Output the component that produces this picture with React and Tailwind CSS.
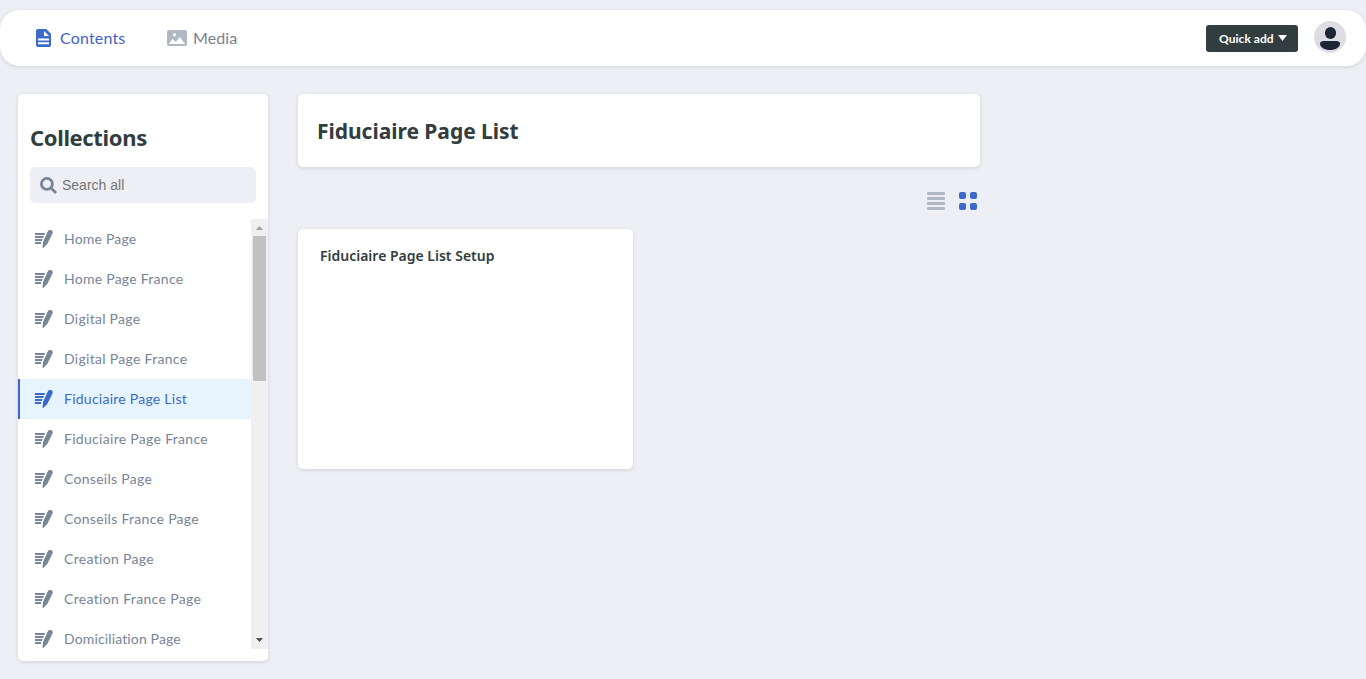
import React from "react";

const collections = [
  { name: "Home Page", tracking: "tracking-[0.2px]" },
  { name: "Home Page France", tracking: "tracking-[0.260px]" },
  { name: "Digital Page", tracking: "tracking-[0.280px]" },
  { name: "Digital Page France", tracking: "tracking-[0.300px]" },
  { name: "Fiduciaire Page List", tracking: "tracking-[0.250px]", active: true },
  { name: "Fiduciaire Page France", tracking: "tracking-[0.300px]" },
  { name: "Conseils Page", tracking: "tracking-[0.280px]" },
  { name: "Conseils France Page", tracking: "tracking-[0.300px]" },
  { name: "Creation Page", tracking: "tracking-[0.330px]" },
  { name: "Creation France Page", tracking: "tracking-[0.340px]" },
  { name: "Domiciliation Page", tracking: "tracking-[0.140px]" },
];

function DocumentIcon() {
  return (
    <svg className="h-[18px] w-[15px] shrink-0" viewBox="0 0 15 18" fill="none">
      <path d="M2 0H10.2L15 4.800V16a2 2 0 0 1-2 2H2a2 2 0 0 1-2-2V2a2 2 0 0 1 2-2Z" fill="#3b6acb" />
      <path d="M8 2v5h5Z" fill="#fff" />
      <path d="M2 10.500h11M2 14.200h11" stroke="#fff" strokeWidth="1.900" />
    </svg>
  );
}

function PictureIcon() {
  return (
    <svg className="h-4 w-5 shrink-0" viewBox="0 0 20 16">
      <rect width="20" height="16" rx="2" fill="#b0b7c5" />
      <circle cx="7.500" cy="4.800" r="1.700" fill="#fff" />
      <path d="M1.800 14 5.600 8.800 8.600 12 12.700 7l5.500 7Z" fill="#fff" />
    </svg>
  );
}

function EditIcon() {
  return (
    <svg className="h-[18px] w-[18px] shrink-0" viewBox="0 0 18 18" fill="currentColor">
      <path d="M0 3h10.400L9.300 5H0ZM0 6h9l-.900 2H0ZM0 9h7.700L6.800 11H0ZM0 12h6.400l-.700 2H0Z" />
      <path d="M12.800 1.500C13.500.1 15 -.3 16.400.3c1.300.6 1.700 2 1 3.400L12.300 14 8.500 17.800c-.4.3-.9.1-.9-.4l.4-5.500Z" />
    </svg>
  );
}

function SearchIcon() {
  return (
    <svg className="h-[17px] w-[17px] shrink-0" viewBox="0 0 17 17" fill="none" stroke="#78849a">
      <circle cx="6.900" cy="6.900" r="5.500" strokeWidth="2.700" />
      <path d="m11.200 11.200 4.800 4.800" strokeWidth="2.800" />
    </svg>
  );
}

function Avatar() {
  return (
    <svg className="mb-0.5 ml-4 h-8 w-8 shrink-0" viewBox="0 0 32 32">
      <circle cx="16" cy="16" r="16" fill="#dddde3" />
      <ellipse cx="16.500" cy="12" rx="5.600" ry="6" fill="#1d2433" />
      <path d="M10 20h12c2.700 0 4 1 4 2.700C26 26 21.500 29 16 29S6 26 6 22.700C6 21 7.300 20 10 20Z" fill="#1d2433" />
    </svg>
  );
}

function Header() {
  return (
    <header className="flex h-14 items-center rounded-[20px] bg-white pr-5 pl-9 font-['Lato',sans-serif] shadow-[0_1px_4px_rgba(0,0,0,0.12)]">
      <a className="flex items-center text-[16px] leading-5 text-[#4461c6]">
        <DocumentIcon />
        <span className="ml-[9px] w-[65px] whitespace-nowrap tracking-[0.180px]">Contents</span>
      </a>
      <a className="ml-[42px] flex items-center text-[16px] leading-5 text-[#7b8190]">
        <PictureIcon />
        <span className="ml-1.5 whitespace-nowrap tracking-[0.100px]">Media</span>
      </a>
      <button className="ml-auto flex h-[27px] w-[92px] items-center rounded-[3px] bg-[#313d3e] pl-[13px] text-[12px] leading-4 font-bold text-white">
        <span className="mt-0.5 w-[56px] text-left tracking-[0.050px] whitespace-nowrap">Quick add</span>
        <svg className="ml-[3px] h-1.5 w-[9px]" viewBox="0 0 9 6">
          <path d="M0 0h9L4.500 6Z" fill="#fff" />
        </svg>
      </button>
      <Avatar />
    </header>
  );
}

function ScrollBar() {
  return (
    <div className="flex h-[430px] w-[17px] shrink-0 flex-col items-center bg-[#f0f0f0]">
      <div className="flex h-[17px] items-center">
        <svg className="h-1 w-[7px]" viewBox="0 0 7 4">
          <path d="M3.500 0 7 4H0Z" fill="#a3a3a3" />
        </svg>
      </div>
      <div className="h-[145px] w-[13px] bg-[#c1c1c1]" />
      <div className="mt-auto flex h-[17px] items-center pb-px">
        <svg className="h-1 w-[7px]" viewBox="0 0 7 4">
          <path d="M0 0h7L3.500 4Z" fill="#505050" />
        </svg>
      </div>
    </div>
  );
}

function Sidebar() {
  return (
    <aside className="flex h-[567px] w-[250px] shrink-0 flex-col rounded-[5px] bg-white shadow-[0_1px_4px_rgba(0,0,0,0.12)]">
      <h2 className="mt-7 ml-3 h-[31px] font-['Noto_Sans',sans-serif] text-[22px] leading-[30px] font-bold tracking-[-0.350px] whitespace-nowrap text-[#313d3e]">
        Collections
      </h2>
      <label className="mx-3 mt-3.5 flex h-9 items-center gap-[5px] rounded-[5px] bg-[#eeeff4] pl-2.5">
        <SearchIcon />
        <input
          className="w-40 bg-transparent font-['Liberation_Sans',sans-serif] text-[14px] leading-5 outline-none placeholder:text-[#757575]"
          placeholder="Search all"
        />
      </label>
      <div className="mt-4 flex h-[430px] overflow-hidden">
        <ul className="min-w-0 flex-1 font-['Lato',sans-serif] text-[14px] leading-5">
          {collections.map((item) => (
            <li
              key={item.name}
              className={
                item.active
                  ? "flex h-10 items-center border-l-2 border-[#4461c6] bg-[#e7f4fe] pl-[15px] text-[#3b6acb]"
                  : "flex h-10 items-center border-l-2 border-transparent pl-[15px] text-[#78849a]"
              }
            >
              <EditIcon />
              <span className={"ml-[11px] whitespace-nowrap " + item.tracking}>{item.name}</span>
            </li>
          ))}
        </ul>
        <ScrollBar />
      </div>
    </aside>
  );
}

function ViewSwitch() {
  return (
    <div className="mt-[25px] flex justify-end gap-3.5 pr-[3px]">
      <svg className="h-[18px] w-[18px]" viewBox="0 0 18 18" fill="#b0b7c5">
        <rect width="18" height="3" rx="1" />
        <rect y="5" width="18" height="3" rx="1" />
        <rect y="10" width="18" height="3" rx="1" />
        <rect y="15" width="18" height="3" rx="1" />
      </svg>
      <svg className="h-[18px] w-[18px]" viewBox="0 0 18 18" fill="#3b6acb">
        <rect width="7" height="7" rx="2" />
        <rect x="11" width="7" height="7" rx="2" />
        <rect y="11" width="7" height="7" rx="2" />
        <rect x="11" y="11" width="7" height="7" rx="2" />
      </svg>
    </div>
  );
}

export default function App() {
  return (
    <div className="h-[679px] overflow-hidden bg-[#eeeff4] pt-2.5">
      <Header />
      <div className="mt-7 flex gap-[30px] pl-[18px]">
        <Sidebar />
        <main className="w-[682px] font-['Noto_Sans',sans-serif] text-[#313d3e]">
          <div className="flex h-[73px] items-center rounded-[5px] bg-white pl-[19px] shadow-[0_1px_4px_rgba(0,0,0,0.12)]">
            <h1 className="text-[21px] leading-[30px] font-bold tracking-[-0.030px] whitespace-nowrap">Fiduciaire Page List</h1>
          </div>
          <ViewSwitch />
          <article className="mt-[19px] h-60 w-[335px] rounded-[5px] bg-white pt-[17px] pl-[22px] shadow-[0_1px_4px_rgba(0,0,0,0.12)]">
            <h3 className="text-[14px] leading-5 font-semibold whitespace-nowrap">Fiduciaire Page List Setup</h3>
          </article>
        </main>
      </div>
    </div>
  );
}
